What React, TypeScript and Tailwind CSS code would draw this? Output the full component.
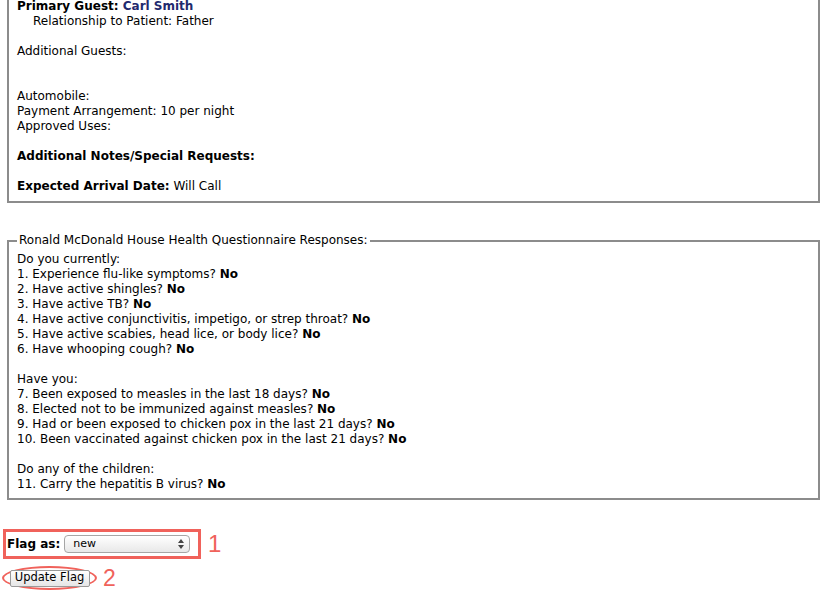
import React from "react";

const font = { fontFamily: '"DejaVu Sans", Verdana, sans-serif' };

function Line({ children }: { children?: React.ReactNode }) {
  return <div className="h-[15px] leading-[15px] whitespace-nowrap">{children}</div>;
}

const Q = ({ t }: { t: string }) => (
  <Line>
    {t} <b>No</b>
  </Line>
);

export default function App() {
  return (
    <div className="w-[829px] h-[590px] overflow-hidden bg-white text-[12px] text-black" style={font}>
      <div className="ml-[7px] w-[813px] -mt-[1px] border-2 border-t-0 border-[#8c8c8c] px-[8px] pb-[7px]">
        <Line>
          <b>Primary Guest: </b>
          <b className="text-[#1f2a6e]">Carl Smith</b>
        </Line>
        <Line>
          <span className="pl-[16px]">Relationship to Patient: Father</span>
        </Line>
        <Line />
        <Line>Additional Guests:</Line>
        <Line />
        <Line />
        <Line>Automobile:</Line>
        <Line>Payment Arrangement: 10 per night</Line>
        <Line>Approved Uses:</Line>
        <Line />
        <Line>
          <b>Additional Notes/Special Requests:</b>
        </Line>
        <Line />
        <Line>
          <b>Expected Arrival Date:</b> Will Call
        </Line>
      </div>

      <fieldset className="ml-[7px] mt-[30px] w-[813px] border-2 border-[#8c8c8c] px-[8px] pt-[4px] pb-[6px]">
        <legend className="px-[2px] leading-[15px]">Ronald McDonald House Health Questionnaire Responses:</legend>
        <Line>Do you currently:</Line>
        <Q t="1. Experience flu-like symptoms?" />
        <Q t="2. Have active shingles?" />
        <Q t="3. Have active TB?" />
        <Q t="4. Have active conjunctivitis, impetigo, or strep throat?" />
        <Q t="5. Have active scabies, head lice, or body lice?" />
        <Q t="6. Have whooping cough?" />
        <Line />
        <Line>Have you:</Line>
        <Q t="7. Been exposed to measles in the last 18 days?" />
        <Q t="8. Elected not to be immunized against measles?" />
        <Q t="9. Had or been exposed to chicken pox in the last 21 days?" />
        <Q t="10. Been vaccinated against chicken pox in the last 21 days?" />
        <Line />
        <Line>Do any of the children:</Line>
        <Q t="11. Carry the hepatitis B virus?" />
      </fieldset>

      <div className="mt-[29px] flex items-center">
        <div className="ml-[3px] flex h-[30px] w-[198px] items-center border-[3px] border-[#f0625b] pl-[1px]">
          <b className="text-[12px]">Flag as:</b>
          <div className="ml-[4px] flex h-[18px] w-[126px] items-center justify-between rounded-[4px] border border-[#a6a6a6] bg-gradient-to-b from-white to-[#e8e8e8] pl-[8px] pr-[5px] text-[11px]">
            <span>new</span>
            <svg width="6" height="10" viewBox="0 0 6 10">
              <path d="M0 4 L3 0 L6 4 Z" fill="#444" />
              <path d="M0 6 L3 10 L6 6 Z" fill="#444" />
            </svg>
          </div>
        </div>
        <span className="ml-[7px] text-[24px] leading-[24px] text-[#f0625b]" style={{ fontFamily: '"Liberation Sans", Arial, sans-serif' }}>
          1
        </span>
      </div>

      <div className="mt-[7px] flex h-[24px] items-center">
        <div className="ml-[2px] flex h-[24px] w-[95px] items-center justify-center rounded-[50%] border-[2px] border-[#f0625b]">
          <div className="flex h-[17px] w-[80px] items-center justify-center rounded-[2px] border border-[#9a9a9a] bg-gradient-to-b from-white to-[#e6e6e6] text-[11.5px]">
            Update Flag
          </div>
        </div>
        <span className="ml-[6px] text-[23px] leading-[24px] text-[#f0625b]" style={{ fontFamily: '"Liberation Sans", Arial, sans-serif' }}>
          2
        </span>
      </div>
    </div>
  );
}
